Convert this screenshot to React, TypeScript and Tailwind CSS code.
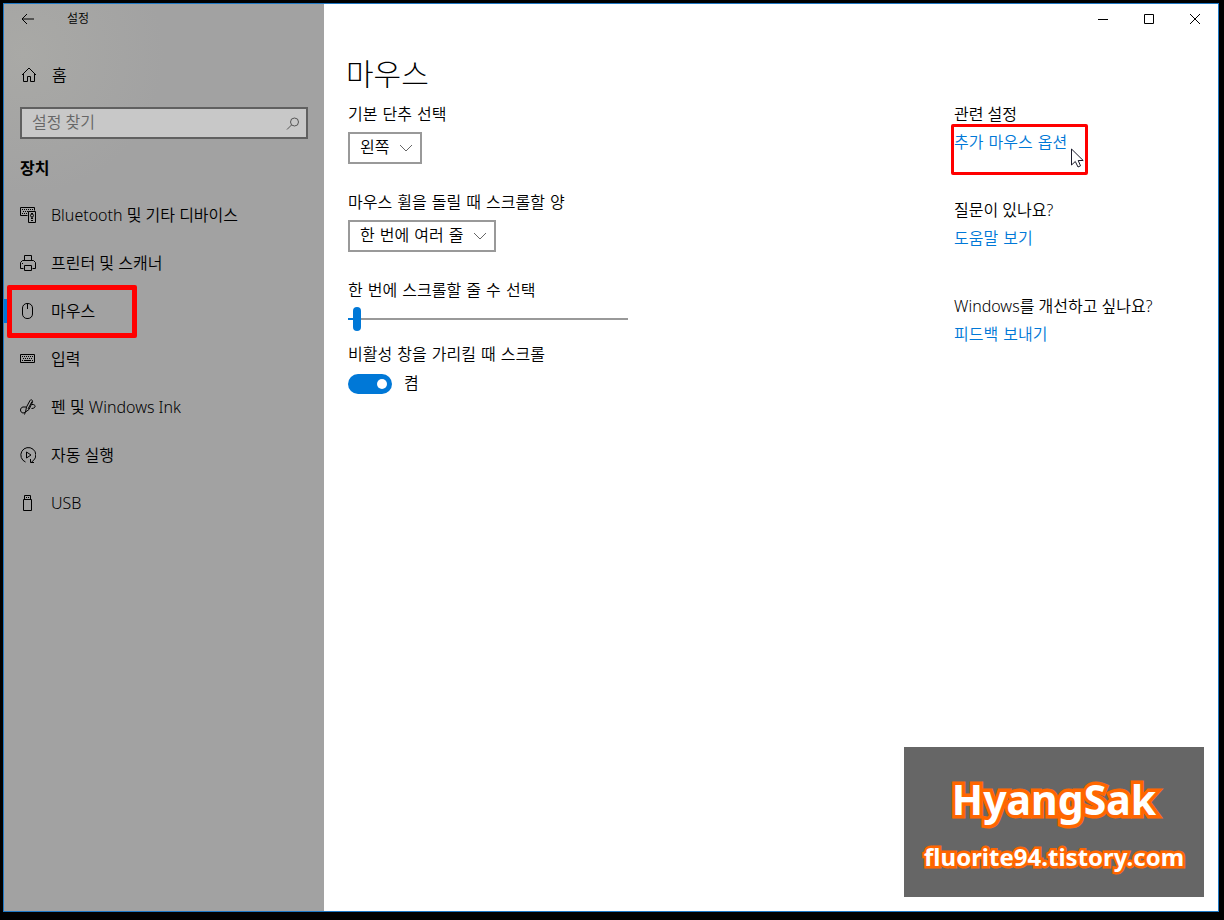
import { useState } from "react";
import type { ReactNode } from "react";

interface NavItem {
  label: string;
  icon: ReactNode;
  active?: boolean;
}

interface RelatedGroup {
  title: string;
  link: string;
  highlighted?: boolean;
}

function Icon({ children }: { children: ReactNode }) {
  return (
    <svg viewBox="0 0 16 16" className="size-4 shrink-0" fill="none" stroke="currentColor" aria-hidden="true">
      {children}
    </svg>
  );
}

const navItems: NavItem[] = [
  {
    label: "Bluetooth 및 기타 디바이스",
    icon: (
      <Icon>
        <path d="M7.5 8.5H.5v-8h14v3" />
        <path d="M2 2.5h11M3 4.5h5M2 6.5h5" strokeDasharray="1 1" />
        <path d="M8.5 4.5h7v11h-7z" />
        <circle cx="12" cy="8.5" r="1.5" />
        <path d="M11 6.5h2M12 10v2M11 11.500h2M11 13.5h2" />
      </Icon>
    ),
  },
  {
    label: "프린터 및 스캐너",
    icon: (
      <Icon>
        <path d="M4.5 5.5v-5h7v5" />
        <path d="M3.5 13.5h-3v-6l2-2h11l2 2v6h-3" />
        <path d="M4.5 10.5h7v5h-7z" />
        <path d="M2 8.5h1" />
      </Icon>
    ),
  },
  {
    label: "마우스",
    active: true,
    icon: (
      <Icon>
        <rect x="2.5" y=".5" width="10" height="15" rx="4.5" />
        <path d="M7.5 1v5" />
      </Icon>
    ),
  },
  {
    label: "입력",
    icon: (
      <Icon>
        <path d="M.5 3.5h14v8H.5z" />
        <path d="M2 5.5h11M3 7.5h10" strokeDasharray="1 1" />
        <path d="M2 9.5h1M4 9.5h7M12 9.5h1" />
      </Icon>
    ),
  },
  {
    label: "펜 및 Windows Ink",
    icon: (
      <Icon>
        <path d="M5.5 13l1-5L10 1.5c1-1.5 3-.5 2.500 1.500L9 10.500zM8 10l4-7.500" />
        <path d="M6 8H3c-3.300.5-3.300 5.500 0 6 1.800 0 2.500-1.500 2.500-1.500L4.500 15.500M12 5.500c4-.5 4.500 4-.5 4" />
      </Icon>
    ),
  },
  {
    label: "자동 실행",
    icon: (
      <Icon>
        <path d="M5.500 15a7.500 7.500 0 1 1 8-1.500l-2 1.500" />
        <path d="M10.500 12v3.500H14" />
        <path d="M6.500 5v6l4.500-3z" />
      </Icon>
    ),
  },
  {
    label: "USB",
    icon: (
      <Icon>
        <path d="M4.500 4.500v-4h6v4" />
        <path d="M3.500 4.500h8v11h-8z" />
        <path d="M6 2.500h1M8 2.500h1" />
      </Icon>
    ),
  },
];

const relatedGroups: RelatedGroup[] = [
  { title: "관련 설정", link: "추가 마우스 옵션", highlighted: true },
  { title: "질문이 있나요?", link: "도움말 보기" },
  { title: "Windows를 개선하고 싶나요?", link: "피드백 보내기" },
];

function Sidebar() {
  return (
    <aside className="w-80 shrink-0 bg-[#a2a2a2] bg-[radial-gradient(circle_at_20px_50px,#a9a9a6,#a2a2a2_140px)]">
      <header className="flex h-[30px] items-center pl-[17px]">
        <button type="button" aria-label="뒤로">
          <svg viewBox="0 0 14 12" className="h-3 w-3.5" fill="none" stroke="currentColor" aria-hidden="true">
            <path d="M13 6H1M6 1L1 6l5 5" />
          </svg>
        </button>
        <span className="ml-8 text-xs">설정</span>
      </header>

      <a href="#home" className="mt-[17px] flex h-12 items-center gap-[15px] pl-[17px]">
        <Icon>
          <path d="M1 8l7-7 7 7M2.500 6.500v8h4v-5h3v5h4v-8" />
        </Icon>
        홈
      </a>

      <div className="relative mx-4 mt-2">
        <input
          type="search"
          aria-label="설정 찾기"
          placeholder="설정 찾기"
          className="block h-8 w-full border-2 border-[#606060] bg-[#c8c8c8] px-2.5 pb-0.5 outline-none placeholder:text-[#666]"
        />
        <svg
          viewBox="0 0 14 14"
          className="absolute top-2.5 right-2 size-3.5"
          fill="none"
          stroke="#555"
          aria-hidden="true"
        >
          <circle cx="8.500" cy="5" r="4" />
          <path d="M5.500 8L1 12.500" />
        </svg>
      </div>

      <h2 className="flex h-[52px] items-center pt-1.5 pl-4 font-bold">장치</h2>

      <nav>
        <ul>
          {navItems.map((item) => (
            <li key={item.label} className="relative">
              <a href="#device" className="flex h-12 items-center gap-[15px] pl-4">
                {item.icon}
                {item.label}
              </a>
              {item.active && (
                <>
                  <span className="absolute top-3 left-0 h-6 w-1 bg-[#0078d7]" />
                  <span className="absolute -top-0.5 left-[3px] h-[53px] w-[130px] rounded-xs border-5 border-[#ff0000]" />
                </>
              )}
            </li>
          ))}
        </ul>
      </nav>
    </aside>
  );
}

function WindowButtons() {
  return (
    <header className="flex h-[30px] justify-end">
      <button type="button" aria-label="최소화" className="flex w-[46px] items-center justify-center">
        <svg viewBox="0 0 10 10" className="size-2.5" stroke="currentColor" fill="none">
          <path d="M0 5.500h10" />
        </svg>
      </button>
      <button type="button" aria-label="최대화" className="flex w-[46px] items-center justify-center">
        <svg viewBox="0 0 10 10" className="size-2.5" stroke="currentColor" fill="none">
          <path d="M.5.5h9v9h-9z" />
        </svg>
      </button>
      <button type="button" aria-label="닫기" className="flex w-[46px] items-center justify-center">
        <svg viewBox="0 0 10 10" className="size-2.5" stroke="currentColor" fill="none">
          <path d="M0 0l10 10M10 0L0 10" />
        </svg>
      </button>
    </header>
  );
}

function SelectField({ id, label, options }: { id: string; label: string; options: string[] }) {
  return (
    <div className="mb-[27px]">
      <label htmlFor={id} className="block">
        {label}
      </label>
      <div className="relative mt-[5px] w-fit">
        <select
          id={id}
          className="block h-8 appearance-none border-2 border-[#999] bg-white pr-[30px] pl-2.5 outline-none"
        >
          {options.map((option) => (
            <option key={option}>{option}</option>
          ))}
        </select>
        <svg
          viewBox="0 0 12 8"
          className="pointer-events-none absolute top-3 right-2.5 h-2 w-3"
          fill="none"
          stroke="#666"
          aria-hidden="true"
        >
          <path d="M0 1l6 6 6-6" />
        </svg>
      </div>
    </div>
  );
}

function MouseSettings() {
  const [lines, setLines] = useState(3);
  const [inactiveScroll, setInactiveScroll] = useState(true);

  return (
    <section className="flex-1 pt-px font-['DejaVu_Sans','Noto_Sans_CJK_KR',sans-serif]">
      <SelectField id="primary" label="기본 단추 선택" options={["왼쪽"]} />
      <SelectField id="wheel" label="마우스 휠을 돌릴 때 스크롤할 양" options={["한 번에 여러 줄"]} />

      <label htmlFor="lines" className="block">
        한 번에 스크롤할 줄 수 선택
      </label>
      <input
        id="lines"
        type="range"
        min={1}
        max={100}
        value={lines}
        onChange={(e) => setLines(Number(e.target.value))}
        className="mt-1 block h-6 w-70 appearance-none bg-[linear-gradient(to_right,#0078d7_8px,#999_8px)] bg-[length:100%_2px] bg-center bg-no-repeat [&::-webkit-slider-thumb]:h-6 [&::-webkit-slider-thumb]:w-2 [&::-webkit-slider-thumb]:appearance-none [&::-webkit-slider-thumb]:rounded-full [&::-webkit-slider-thumb]:bg-[#0078d7]"
      />

      <p id="inactive-label" className="mt-3">
        비활성 창을 가리킬 때 스크롤
      </p>
      <div className="mt-[7px] flex h-5 items-center gap-3">
        <input
          id="inactive"
          type="checkbox"
          role="switch"
          aria-labelledby="inactive-label"
          checked={inactiveScroll}
          onChange={(e) => setInactiveScroll(e.target.checked)}
          className="flex h-5 w-11 appearance-none items-center rounded-full bg-[#999] px-[5px] before:size-2.5 before:rounded-full before:bg-white checked:justify-end checked:bg-[#0078d7]"
        />
        <label htmlFor="inactive">{inactiveScroll ? "켬" : "끔"}</label>
      </div>
    </section>
  );
}

function Related() {
  return (
    <section className="flex w-66 flex-col gap-[43px]">
      {relatedGroups.map((group) => (
        <div key={group.title}>
          <h3>{group.title}</h3>
          <div className="relative mt-[5px]">
            <a href="#related" className="block w-fit font-['DejaVu_Sans','Noto_Sans_CJK_KR',sans-serif] text-[#0078d7]">
              {group.link}
            </a>
            {group.highlighted && (
              <>
                <span className="absolute -top-[7px] -left-[3px] h-[51px] w-[137px] rounded-xs border-3 border-[#ff0000]" />
                <svg viewBox="0 0 13 20" className="absolute top-[17px] left-[117px] h-5 w-[13px]" aria-hidden="true">
                  <path d="M.5 1v16l3.800-3.500L7 19l2.500-1.200L7.200 12.500h5z" fill="#fff" stroke="#1a1a2a" />
                </svg>
              </>
            )}
          </div>
        </div>
      ))}
    </section>
  );
}

function Watermark() {
  return (
    <div className="absolute right-3.5 bottom-3.5 flex h-[150px] w-[300px] flex-col items-center bg-[#666] pt-[26px] font-['Noto_Sans'] font-bold text-white [paint-order:stroke_fill] [-webkit-text-stroke-color:#ff6600] [stroke-linejoin:round]">
      <p className="text-[41px] leading-[52px] [-webkit-text-stroke-width:7px]">HyangSak</p>
      <p className="mt-4 text-2xl leading-8 [-webkit-text-stroke-width:5px]">fluorite94.tistory.com</p>
    </div>
  );
}

export default function App() {
  return (
    <div className="flex min-h-screen bg-black pt-[3px] pr-[5px] pb-2 pl-[3px] font-['Noto_Sans','Noto_Sans_CJK_KR',sans-serif] text-base font-[350] text-black">
      <div className="relative flex flex-1 border border-[#1f78c4] bg-white">
        <Sidebar />
        <main className="flex-1">
          <WindowButtons />
          <div className="pl-6">
            <h1 className="mt-5 -ml-0.5 text-3xl leading-10 font-light">마우스</h1>
            <div className="mt-2 flex">
              <MouseSettings />
              <Related />
            </div>
          </div>
        </main>
        <Watermark />
      </div>
    </div>
  );
}
